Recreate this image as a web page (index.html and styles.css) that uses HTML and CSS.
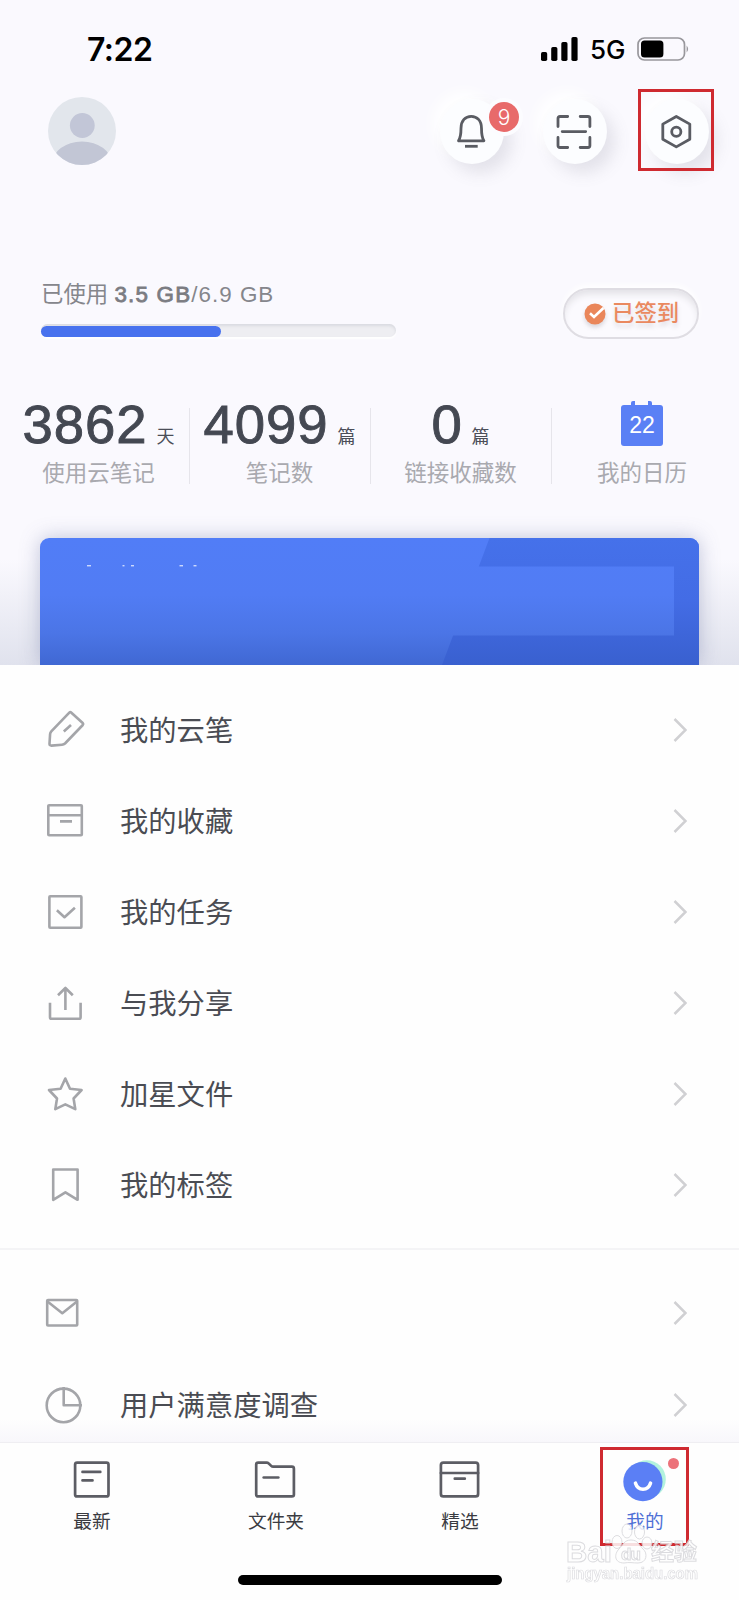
FILE: index.html
```html
<!DOCTYPE html>
<html lang="zh-CN">
<head>
    <meta charset="UTF-8">
    <meta name="viewport" content="width=device-width, initial-scale=1.0">
    <title>我的</title>
    <link rel="stylesheet" href="styles.css">
</head>
<body>
    <div class="screen">
        <div class="status-bar">
            <span class="time">7:22</span>
            <div class="status-right">
                <svg class="signal" width="38" height="24" viewBox="0 0 38 24">
                    <rect x="0" y="15" width="6.2" height="9" rx="1.700"/>
                    <rect x="10.2" y="10" width="6.2" height="14" rx="1.700"/>
                    <rect x="20.3" y="5" width="6.2" height="19" rx="1.700"/>
                    <rect x="30.4" y="0" width="6.2" height="24" rx="1.700"/>
                </svg>
                <span class="network">5G</span>
                <svg width="53" height="24" viewBox="0 0 53 24">
                    <rect x="1" y="1" width="46.5" height="22" rx="6.5" fill="none" stroke="#98979c" stroke-width="1.7"/>
                    <rect x="4" y="3.6" width="22.4" height="17" rx="3.5"/>
                    <path d="M49.6 8.5q3 3.5 0 7z" fill="#98979c"/>
                </svg>
            </div>
        </div>

        <div class="header">
            <svg class="avatar" width="68" height="68" viewBox="0 0 68 68">
                <clipPath id="face"><circle cx="34" cy="34" r="34"/></clipPath>
                <g clip-path="url(#face)">
                    <rect width="68" height="68" fill="#e2e6ec"/>
                    <circle cx="34.300" cy="28.5" r="12.4" fill="#c2c6d7"/>
                    <ellipse cx="34" cy="67" rx="30" ry="22.5" fill="#c2c6d5"/>
                </g>
            </svg>
            <div class="actions">
                <div class="round-btn">
                    <svg width="44" height="44" viewBox="0 0 44 44">
                        <path d="M8.5 30.8h25.4c-2-3-2.400-6-2.400-12.500C31.500 10.500 27 6.300 21.200 6.300S11 10.500 11 18.300c0 6.500-.5 9.500-2.500 12.500z"/>
                        <path d="M15 36.300h12.700"/>
                    </svg>
                    <span class="badge">9</span>
                </div>
                <div class="round-btn">
                    <svg width="44" height="44" viewBox="0 0 44 44">
                        <path d="M5 16.500V8.500q0-2 2-2h7.700M27.200 6.500h7.700q2 0 2 2v8M36.900 27.500v8q0 2-2 2h-7.700M14.700 37.500H7q-2 0-2-2v-8M9.200 21.600h23.500" stroke-linecap="round"/>
                    </svg>
                </div>
                <div class="round-btn">
                    <svg width="44" height="44" viewBox="0 0 44 44">
                        <path d="M21.300 6.500l13.500 7.600v15.200l-13.500 7.600-13.500-7.600V14.100z"/>
                        <circle cx="21.300" cy="21.700" r="4.600"/>
                    </svg>
                    <span class="mark mark-settings"></span>
                </div>
            </div>
        </div>

        <div class="storage">
            <div class="usage">
                <div class="usage-text">已使用 <b>3.5 GB</b><span class="total">/6.9 GB</span></div>
                <div class="progress"><div class="progress-fill" style="width: 50.8%"></div></div>
            </div>
            <div class="signed">
                <svg width="24" height="24" viewBox="0 0 24 24">
                    <circle cx="12" cy="12" r="10.500" fill="#ea865a"/>
                    <path d="M7 11.300l4 3.600L20.500 6" fill="none" stroke="#fff" stroke-width="2.600"/>
                </svg>
                <span>已签到</span>
            </div>
        </div>

        <div class="stats">
            <div class="stat">
                <div class="stat-value"><span class="num">3862</span><span class="unit">天</span></div>
                <div class="stat-label">使用云笔记</div>
            </div>
            <div class="stat">
                <div class="stat-value"><span class="num">4099</span><span class="unit">篇</span></div>
                <div class="stat-label">笔记数</div>
            </div>
            <div class="stat">
                <div class="stat-value"><span class="num">0</span><span class="unit">篇</span></div>
                <div class="stat-label">链接收藏数</div>
            </div>
            <div class="stat">
                <div class="stat-value"><div class="calendar">22</div></div>
                <div class="stat-label">我的日历</div>
            </div>
        </div>

        <div class="banner-area">
            <div class="banner">
                <svg width="659" height="127" viewBox="0 0 659 127">
                    <defs>
                        <linearGradient id="light" gradientUnits="userSpaceOnUse" x1="0" y1="0" x2="0" y2="127">
                            <stop offset="0" stop-color="#517df7"/>
                            <stop offset=".45" stop-color="#517cf4"/>
                            <stop offset=".75" stop-color="#4b75e6"/>
                            <stop offset="1" stop-color="#4068d3"/>
                        </linearGradient>
                        <linearGradient id="dark" gradientUnits="userSpaceOnUse" x1="0" y1="0" x2="0" y2="127">
                            <stop offset="0" stop-color="#4571ea"/>
                            <stop offset=".5" stop-color="#436ce5"/>
                            <stop offset="1" stop-color="#3960cf"/>
                        </linearGradient>
                    </defs>
                    <rect width="659" height="127" fill="url(#light)"/>
                    <path d="M449.500 0H659v127H402z" fill="url(#dark)"/>
                    <rect x="380" y="28.500" width="254" height="69" fill="url(#light)"/>
                    <path d="M47 27.800h4M82.500 27.800h2M91 27.800h3M139.500 27.800h3.500M153.500 27.800h3" stroke="#fff" stroke-width="1"/>
                </svg>
            </div>
        </div>

        <div class="sheet">
            <div class="menu">
                <div class="row">
                    <svg class="icon" width="44" height="44" viewBox="0 0 44 44">
                        <path d="M26.300 4.700q1-1 2.100 0L39.700 15q1 1 .1 2L22 35.500q-1.200 1.100-3 1.200l-10.500.9q-2.100.1-2-1.900l.6-9.500q.1-1.700 1.200-2.900z"/>
                        <path d="M20.800 23.500l7.200-6.500"/>
                    </svg>
                    <span class="name">我的云笔</span>
                    <svg class="arrow" width="14" height="26" viewBox="0 0 14 26"><path d="M1.500 2l11 11-11 11"/></svg>
                </div>
                <div class="row">
                    <svg class="icon" width="44" height="44" viewBox="0 0 44 44">
                        <rect x="5.300" y="6.300" width="33.500" height="30" rx=".8"/>
                        <path d="M5.300 16.200H39M17 22.400h12"/>
                    </svg>
                    <span class="name">我的收藏</span>
                    <svg class="arrow" width="14" height="26" viewBox="0 0 14 26"><path d="M1.500 2l11 11-11 11"/></svg>
                </div>
                <div class="row">
                    <svg class="icon" width="44" height="44" viewBox="0 0 44 44">
                        <rect x="6.400" y="6.300" width="32" height="31.500" rx=".8"/>
                        <path d="M13.900 20.200l7.600 7 10.400-9.400"/>
                    </svg>
                    <span class="name">我的任务</span>
                    <svg class="arrow" width="14" height="26" viewBox="0 0 14 26"><path d="M1.500 2l11 11-11 11"/></svg>
                </div>
                <div class="row">
                    <svg class="icon" width="44" height="44" viewBox="0 0 44 44">
                        <path d="M7 21.800V36.200q0 1.600 1.600 1.600H36q1.600 0 1.600-1.600V21.800"/>
                        <path d="M22.400 29V6.800M15 14.300l7.400-7.300 7.400 7.300"/>
                    </svg>
                    <span class="name">与我分享</span>
                    <svg class="arrow" width="14" height="26" viewBox="0 0 14 26"><path d="M1.500 2l11 11-11 11"/></svg>
                </div>
                <div class="row">
                    <svg class="icon" width="44" height="44" viewBox="0 0 44 44">
                        <path d="M22.300 6.500l4.700 10.200 11.600 1.300-8 8.500 1.700 10.700-10-4.800-10 4.800L14 26.500 6 18l11.600-1.300z"/>
                    </svg>
                    <span class="name">加星文件</span>
                    <svg class="arrow" width="14" height="26" viewBox="0 0 14 26"><path d="M1.500 2l11 11-11 11"/></svg>
                </div>
                <div class="row">
                    <svg class="icon" width="44" height="44" viewBox="0 0 44 44">
                        <path d="M10.200 6.500h24.400V36.800L22.400 29.300 10.200 36.800z"/>
                    </svg>
                    <span class="name">我的标签</span>
                    <svg class="arrow" width="14" height="26" viewBox="0 0 14 26"><path d="M1.500 2l11 11-11 11"/></svg>
                </div>
            </div>
            <div class="menu">
                <div class="row">
                    <svg class="icon" width="44" height="44" viewBox="0 0 44 44">
                        <rect x="4.200" y="9" width="30" height="25.500" rx=".8"/>
                        <path d="M4.500 10.500l14.800 11.700 14.700-11.700"/>
                    </svg>
                    <span class="name"></span>
                    <svg class="arrow" width="14" height="26" viewBox="0 0 14 26"><path d="M1.500 2l11 11-11 11"/></svg>
                </div>
                <div class="row">
                    <svg class="icon" width="44" height="44" viewBox="0 0 44 44">
                        <circle cx="20.500" cy="22.400" r="16.800"/>
                        <path d="M20.700 4v18.200H39"/>
                    </svg>
                    <span class="name">用户满意度调查</span>
                    <svg class="arrow" width="14" height="26" viewBox="0 0 14 26"><path d="M1.500 2l11 11-11 11"/></svg>
                </div>
            </div>
        </div>

        <div class="tab-bar">
            <div class="tab">
                <svg width="44" height="44" viewBox="0 0 44 44">
                    <rect x="5.100" y="4.600" width="33.400" height="33.800" rx="2"/>
                    <path d="M12.500 13.900h17.800M12.500 22.400h10" stroke-linecap="round"/>
                </svg>
                <span>最新</span>
            </div>
            <div class="tab">
                <svg width="44" height="44" viewBox="0 0 44 44">
                    <path d="M2.200 6.500q0-1.900 1.900-1.900h8.500q1.200 0 2 .8l2.600 2.500q.8.800 2 .8h18.700q2 0 2 2V36.500q0 1.900-2 1.900H4.100q-1.900 0-1.900-1.900z"/>
                    <path d="M9.700 19.500h14.600" stroke-linecap="round"/>
                </svg>
                <span>文件夹</span>
            </div>
            <div class="tab">
                <svg width="44" height="44" viewBox="0 0 44 44">
                    <rect x="2.900" y="4.600" width="37.200" height="33.800" rx="2.500"/>
                    <path d="M2.900 15h37.200M16.800 20.700h10" stroke-linecap="round"/>
                </svg>
                <span>精选</span>
            </div>
            <div class="tab active">
                <svg width="44" height="44" viewBox="0 0 44 44">
                    <circle cx="24.800" cy="21.200" r="19" fill="#b2f2de" stroke="none"/>
                    <circle cx="20.900" cy="23.700" r="19.600" fill="#5b7ff5" stroke="none"/>
                    <path d="M13.500 25.200c2.500 8 12.500 8 15 0" stroke="#fff" stroke-width="3.600" stroke-linecap="round"/>
                </svg>
                <span>我的</span>
                <i class="dot"></i>
                <i class="mark mark-mine"></i>
            </div>
            <div class="home-indicator"></div>
        </div>

        <svg class="watermark" width="140" height="70" viewBox="0 0 140 70">
            <g fill="#fff" stroke="#d6d6da" stroke-width="1">
                <text x="1" y="43" font-size="30" font-weight="700" textLength="46" lengthAdjust="spacingAndGlyphs">Bai</text>
                <path d="M66 21c7 0 8 5 12 9 5 4 4 14-5 14-5 0-9-1-14 0-10 0-10-9-5-14 4-4 5-9 12-9z"/>
                <ellipse cx="52" cy="23" rx="5" ry="6.500"/>
                <ellipse cx="62" cy="12" rx="5" ry="7"/>
                <ellipse cx="74.500" cy="13" rx="5" ry="7"/>
                <ellipse cx="82" cy="24" rx="5" ry="6"/>
                <text x="56" y="41" font-size="17" font-weight="700" textLength="20">du</text>
                <text class="cjk" x="86" y="41" font-size="23" textLength="46">经验</text>
                <text x="2" y="60" font-size="16" font-weight="700" stroke-width=".7" textLength="131" lengthAdjust="spacingAndGlyphs">jingyan.baidu.com</text>
            </g>
        </svg>
    </div>
</body>
</html>
```

FILE: styles.css
```css
body {
    margin: 0;
    background-color: #faf9fe;
    font-family: "Liberation Sans", "Noto Sans CJK SC", sans-serif;
    color: #40434d;
}
.screen {
    position: relative;
    display: flex;
    flex-direction: column;
    width: 739px;
    height: 1600px;
    overflow: hidden;
}
svg {
    display: block;
    flex-shrink: 0;
}
.status-bar {
    display: flex;
    justify-content: space-between;
    align-items: center;
    height: 97px;
    padding: 0 49px 0 87px;
    box-sizing: border-box;
    color: #000;
    font-family: Inter, sans-serif;
}
.time {
    font-size: 32px;
    font-weight: 600;
    line-height: 40px;
    letter-spacing: -0.5px;
    padding-top: 3px;
}
.status-right {
    display: flex;
    align-items: center;
}
.signal {
    margin-right: 11px;
}
.network {
    width: 47px;
    font-size: 26px;
    font-weight: 500;
    line-height: 30px;
    padding-top: 3px;
}

/* avatar and round buttons */
.header {
    display: flex;
    justify-content: space-between;
    height: 180px;
    padding: 0 30px 0 48px;
}
.actions {
    display: flex;
    gap: 38.500px;
    padding-top: 2px;
}
.round-btn {
    position: relative;
    display: flex;
    align-items: center;
    justify-content: center;
    width: 64px;
    height: 65px;
    border-radius: 50%;
    background-color: #fcfdff;
    box-shadow: 8px 9px 16px rgba(110, 110, 130, 0.16), -8px -8px 14px rgba(255, 255, 255, 0.9);
    fill: none;
    stroke: #5a5c63;
    stroke-width: 2.800;
    stroke-linejoin: round;
}
.badge {
    position: absolute;
    left: 49px;
    top: 3px;
    width: 30px;
    height: 30px;
    border-radius: 50%;
    background-color: #e86a6a;
    box-shadow: 0 0 0 4px #fcfcff;
    color: #fff;
    font-family: Inter, sans-serif;
    font-size: 21px;
    font-weight: 300;
    line-height: 31px;
    text-align: center;
}
.mark {
    position: absolute;
    box-sizing: border-box;
    border: 3px solid #cf2a30;
}
.mark-settings {
    left: -7px;
    top: -10px;
    width: 76px;
    height: 82px;
}

/* storage */
.storage {
    display: flex;
    justify-content: space-between;
    height: 125px;
    padding: 0 40px 0 41px;
}
.usage {
    width: 355px;
}
.usage-text {
    padding-top: 1px;
    font-size: 22.400px;
    line-height: 33px;
    color: #85868c;
    white-space: nowrap;
}
.usage-text b {
    font-weight: 400;
    color: #7b7c82;
    letter-spacing: 1.200px;
    -webkit-text-stroke: 0.800px #7b7c82;
}
.total {
    letter-spacing: 1px;
}
.progress {
    height: 13px;
    margin-top: 13px;
    padding-top: 2px;
    box-sizing: border-box;
    border-radius: 7px;
    background-color: #eeeef2;
    box-shadow: inset 0 2px 3px #d9dae0, 0 2px 2px #fff;
}
.progress-fill {
    height: 11px;
    border-radius: 6px;
    background-color: #4872ee;
}
.signed {
    display: flex;
    align-items: center;
    gap: 5px;
    width: 136px;
    height: 51px;
    margin-top: 11px;
    padding-left: 18px;
    box-sizing: border-box;
    border: 2px solid #dfdde3;
    border-radius: 26px;
    background-color: #fbfafe;
    box-shadow: inset 0 6px 7px -2px #e2e1e6, 0 -3px 6px #fff;
    color: #ea8960;
    font-size: 22.400px;
    font-weight: 500;
}
.signed svg {
    filter: drop-shadow(0 3px 2px rgba(120, 110, 120, 0.25));
}
.signed span {
    padding-top: 1px;
    line-height: 30px;
    text-shadow: 0 4px 4px rgba(120, 110, 120, 0.2);
}

/* counters */
.stats {
    display: grid;
    grid-template-columns: repeat(4, 181px);
    height: 112px;
    padding-left: 8.500px;
}
.stat {
    height: 76px;
    margin-top: 6px;
    border-right: 1px solid #e6e5eb;
}
.stat:last-child {
    border-right: none;
}
.stat-value {
    display: flex;
    justify-content: center;
    align-items: baseline;
    height: 50px;
}
.num {
    font-size: 54.500px;
    line-height: 33px;
    letter-spacing: 0.900px;
    color: #444852;
    -webkit-text-stroke: 0.900px #444852;
}
.unit {
    margin-left: 9px;
    font-size: 18px;
    line-height: 20px;
    color: #4b4e58;
}
.stat-label {
    font-size: 22.500px;
    line-height: 32px;
    color: #a9a9af;
    text-align: center;
    white-space: nowrap;
}
.calendar {
    position: relative;
    width: 42px;
    height: 41px;
    margin-top: -3px;
    border-radius: 3px;
    background-color: #5a80f5;
    color: #fff;
    font-size: 23px;
    line-height: 40px;
    text-align: center;
}
.calendar::before {
    content: "";
    position: absolute;
    left: 10px;
    top: -4px;
    width: 13px;
    height: 8px;
    border: solid #5a80f5;
    border-width: 0 4px;
    border-radius: 2px;
}

/* blue banner */
.banner-area {
    height: 151px;
    padding: 24px 40px 0;
    box-sizing: border-box;
    background: linear-gradient(rgba(226, 228, 239, 0) 30%, #e0e2ed);
}
.banner {
    height: 127px;
    overflow: hidden;
    border-radius: 9px 9px 0 0;
    box-shadow: 0 0 20px rgba(90, 100, 150, 0.36);
}

.sheet {
    position: relative;
    height: 777px;
    overflow: hidden;
    background: linear-gradient(#fefefe 97%, #f8f7fb);
}
.menu {
    padding: 19px 0 17px;
}
.menu + .menu {
    border-top: 2px solid #f4f4f6;
    padding-top: 18px;
}
.row {
    display: flex;
    align-items: center;
    height: 91.150px;
    padding: 0 52px 0 43px;
}
.icon {
    fill: none;
    stroke: #a4a5a9;
    stroke-width: 2.600;
    stroke-linejoin: round;
}
.name {
    flex: 1;
    margin-left: 33px;
    padding-top: 2px;
    font-size: 28.300px;
    line-height: 40px;
    color: #4a4c53;
}
.arrow {
    fill: none;
    stroke: #d0d0d3;
    stroke-width: 2.500;
}

/* bottom tabs */
.tab-bar {
    position: relative;
    display: grid;
    grid-template-columns: repeat(4, 184px);
    flex: 1;
    border-top: 1px solid #efeef2;
    background-color: #fefefe;
}
.tab {
    position: relative;
    display: flex;
    flex-direction: column;
    align-items: center;
    padding-top: 15px;
    fill: none;
    stroke: #5c5d64;
    stroke-width: 2.700;
    stroke-linejoin: round;
    font-size: 18.700px;
    line-height: 28px;
    color: #3a3b41;
}
.tab span {
    margin-top: 6px;
}
.active {
    color: #4e70d6;
}
.active span {
    padding-left: 2px;
}
.dot {
    position: absolute;
    left: 116px;
    top: 15px;
    width: 11px;
    height: 11px;
    border-radius: 50%;
    background-color: #ec727a;
}
.mark-mine {
    left: 48px;
    top: 4px;
    width: 89px;
    height: 99px;
}
.home-indicator {
    position: absolute;
    left: 238px;
    bottom: 15px;
    width: 264px;
    height: 10px;
    border-radius: 5px;
    background-color: #000;
}
.watermark {
    position: absolute;
    left: 565px;
    top: 1519px;
    opacity: 0.850;
}
.watermark .cjk {
    font-family: "Noto Sans CJK SC", sans-serif;
    font-weight: 700;
}
```
